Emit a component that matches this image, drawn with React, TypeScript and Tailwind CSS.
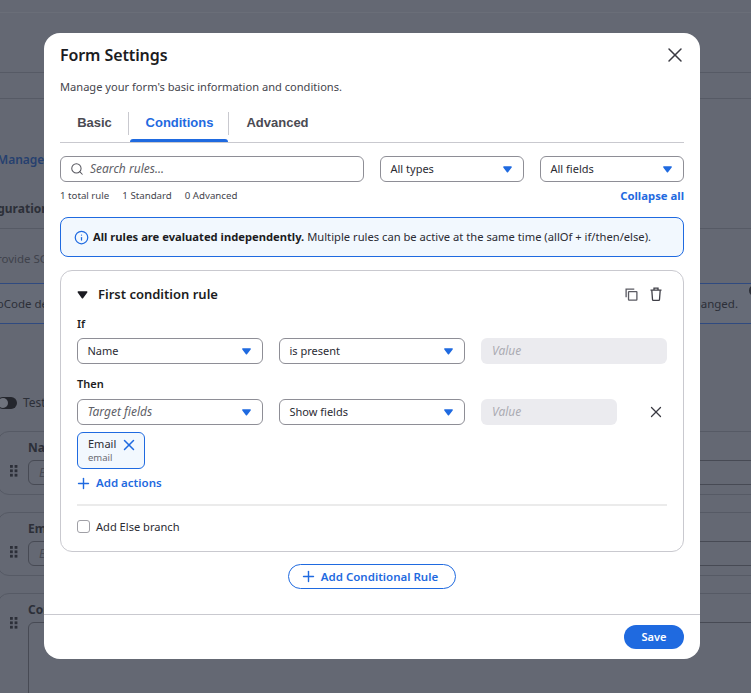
import { Search, X, Plus, Info } from 'lucide-react';

const Caret = ({ color = '#1f6ae0', big }: { color?: string; big?: boolean }) => (
  <svg width={big ? 11 : 9} height={big ? 8 : 7} viewBox="0 0 9 7" className="shrink-0">
    <path d="M.9.3h7.2c.6 0 .9.6.6 1.1L5 6.3c-.3.4-.8.4-1.1 0L.3 1.4C0 .9.3.3.9.3z" fill={color} />
  </svg>
);

const Select = ({ label, placeholder, className }: { label: string; placeholder?: boolean; className: string }) => (
  <div className={`h-[26px] rounded-md border border-[#8e8e96] bg-white flex items-center justify-between pl-[9.5px] pr-[11px] ${className}`}>
    <span className={placeholder ? 'text-xs italic text-[#5f5f68]' : 'text-[11px] text-[#2b2b33]'}>{label}</span>
    <Caret />
  </div>
);

const ValueInput = ({ className }: { className: string }) => (
  <div className={`h-[26px] rounded-md bg-[#ebebef] flex items-center pl-[11px] text-xs italic text-[#ababb3] ${className}`}>Value</div>
);

const Grip = () => (
  <svg width="8" height="12" viewBox="0 0 8 12" className="shrink-0">
    {[0, 4.4, 8.8].map((y) => (
      <g key={y} fill="#2c2f38">
        <rect x="0" y={y} width="2.8" height="2.8" />
        <rect x="4.6" y={y} width="2.8" height="2.8" />
      </g>
    ))}
  </svg>
);

const BackCard = ({ label, grip, tall }: { label: string; grip: string; tall?: boolean }) => (
  <div className={`ml-[-3px] w-[780px] rounded-xl border border-[#565a65] flex gap-[10px] pl-[12px] whitespace-nowrap ${tall ? 'h-[130px]' : 'h-[64px]'}`}>
    <div className={grip}>
      <Grip />
    </div>
    <div className="flex-1 pt-2">
      <div className="text-xs font-bold text-[#2c2f38] leading-4">{label}</div>
      <div className={`mt-1 w-[735px] rounded-md border border-[#474a54] pl-[10px] text-xs italic text-[#474a54] leading-[23px] ${tall ? 'h-[120px]' : 'h-[25px]'}`}>
        {!tall && 'Enter'}
      </div>
    </div>
  </div>
);

export default function App() {
  return (
    <div className="relative w-[751px] h-[693px] overflow-hidden bg-[#646873] font-['Noto_Sans',sans-serif]">
      {/* page behind the dialog */}
      <div className="h-[13px] border-b border-[#6a6e78]" />
      <div className="h-[60px] border-b border-[#565a65]" />
      <div className="h-[26px] border-b border-[#565a65]" />
      <div className="h-[130px] border-b border-[#565a65] pt-[53px] overflow-hidden whitespace-nowrap">
        <div className="ml-[-3px] text-xs font-semibold text-[#26406f] leading-4">Manage F</div>
        <div className="ml-[-34px] mt-[33px] text-xs font-bold text-[#2c2f38] leading-4">Configuration</div>
      </div>
      <div className="h-[54px] pt-[22px] overflow-hidden whitespace-nowrap">
        <div className="ml-[-10px] text-[11.5px] text-[#3f424b] leading-4">Provide SG</div>
      </div>
      <div className="h-[41px] border-y border-[#2f4a80] bg-[#666b77] flex items-center justify-between whitespace-nowrap overflow-hidden">
        <span className="ml-[-12px] text-[11.5px] text-[#2c2f38]">NoCode de</span>
        <div className="flex items-start gap-[11px] mr-[-9px]">
          <span className="text-[11.5px] text-[#2c2f38]">changed.</span>
          <span className="w-[11px] h-[11px] rounded-full bg-[#2c2f38] mt-[-10px]" />
        </div>
      </div>
      <div className="h-[107px] pt-[71px]">
        <div className="flex items-center gap-[6px]">
          <div className="ml-[-3px] w-[20px] h-[12px] rounded-full bg-[#24262d] flex items-center">
            <div className="w-[10px] h-[10px] rounded-full bg-[#6f737d] ml-[1px]" />
          </div>
          <span className="text-xs text-[#2c2f38]">Test</span>
        </div>
      </div>
      <BackCard label="Name" grip="pt-[33px]" />
      <div className="h-[17px]" />
      <BackCard label="Email" grip="pt-[33px]" />
      <div className="h-[17px]" />
      <BackCard label="Comments" grip="pt-[23px]" tall />

      {/* dialog */}
      <div className="absolute left-[44px] top-[33px] w-[656px] h-[626px] rounded-2xl bg-white flex flex-col">
        <div className="flex-1 min-h-0 px-4">
          <div className="flex items-center justify-between h-[44px] pb-[1px]">
            <h2 className="text-base font-semibold text-[#1c1c22] tracking-[-0.1px]">Form Settings</h2>
            <X size={24} strokeWidth={1.5} color="#3a3a42" className="mr-[-3px]" />
          </div>
          <p className="mt-[1px] h-[18px] text-[11.1px] leading-[18px] text-[#45454d]">Manage your form's basic information and conditions.</p>

          <div className="mt-[10px] h-[37px] border-b border-[#c9c9cf] flex font-['Liberation_Sans',sans-serif] text-[13px] font-bold">
            <div className="w-[68px] flex justify-center items-center text-[#4a4a52] pb-[3px] pl-[1px]">Basic</div>
            <div className="w-[101px] h-[23px] mt-[6px] border-x border-[#c9c9cf] flex flex-col">
              <div className="h-[21px] shrink-0 flex justify-center items-center text-[#1f6ae0] pl-[2px]">Conditions</div>
              <div className="h-[3px] shrink-0 ml-[1px] bg-[#1f6ae0] rounded-t-sm mt-[6px]" />
            </div>
            <div className="w-[97px] flex justify-center items-center text-[#4a4a52] pb-[3px]">Advanced</div>
          </div>

          <div className="mt-[13px] flex gap-4">
            <div className="w-[304px] h-[26px] rounded-md border border-[#8e8e96] flex items-center gap-[6px] pl-[9px]">
              <Search size={14} strokeWidth={1.75} color="#55555d" />
              <span className="text-xs italic text-[#5f5f68]">Search rules...</span>
            </div>
            <Select label="All types" className="w-[144px]" />
            <Select label="All fields" className="w-[144px]" />
          </div>

          <div className="mt-[6px] h-[16px] flex items-center justify-between">
            <div className="flex gap-[13px] text-[9.7px] text-[#45454d]">
              <span>1 total rule</span>
              <span>1 Standard</span>
              <span>0 Advanced</span>
            </div>
            <span className="text-[11.3px] font-bold text-[#1f6ae0]">Collapse all</span>
          </div>

          <div className="mt-[13px] h-[40px] rounded-lg border border-[#1f6ae0] bg-[#f2f8fe] flex items-center gap-[4px] px-[13px] text-[11.2px] text-[#2b2b33] whitespace-nowrap">
            <Info size={15} strokeWidth={2} color="#1f6ae0" className="shrink-0" />
            <span>
              <b className="font-bold text-[#1c1c22]">All rules are evaluated independently.</b> Multiple rules can be active at the same time (allOf + if/then/else).
            </span>
          </div>

          <div className="mt-[13px] h-[282px] rounded-xl border border-[#c9c9cf] px-4 pt-[15px]">
            <div className="flex items-center justify-between h-[18px]">
              <div className="flex items-center gap-[10px]">
                <Caret color="#1c1c22" big />
                <span className="text-[13px] font-semibold text-[#1c1c22]">First condition rule</span>
              </div>
              <div className="flex items-center gap-[12px] mr-[5px] mb-[2px]">
                <svg width="13" height="13" viewBox="0 0 14 14" fill="none" stroke="#5a5a62" strokeWidth="1.4">
                  <path d="M1.2 10V1.2H10" />
                  <rect x="3.8" y="3.8" width="9" height="9.2" rx="0.6" />
                </svg>
                <svg width="12" height="14" viewBox="0 0 12 14" fill="none" stroke="#3f3f47" strokeWidth="1.3">
                  <path d="M.5 3.2h11M4 3V1.2h4V3" />
                  <path d="M1.8 3.2l.7 9.2c0 .5.4.9.9.9h5.2c.5 0 .9-.4.9-.9l.7-9.2" />
                </svg>
              </div>
            </div>

            <div className="mt-[12px] h-[15px] text-[11px] leading-[15px] font-semibold text-[#1c1c22]">If</div>
            <div className="mt-[7px] flex gap-4">
              <Select label="Name" className="w-[186px]" />
              <Select label="is present" className="w-[186px]" />
              <ValueInput className="w-[186px]" />
            </div>

            <div className="mt-[12px] h-[15px] text-[11px] leading-[15px] font-semibold text-[#1c1c22]">Then</div>
            <div className="mt-[8px] flex items-center gap-4">
              <Select label="Target fields" placeholder className="w-[186px]" />
              <Select label="Show fields" className="w-[186px]" />
              <ValueInput className="w-[136px]" />
              <X size={18} strokeWidth={1.75} color="#3a3a42" className="ml-[14px]" />
            </div>

            <div className="mt-[7px] w-[68px] h-[37px] rounded-md border border-[#1f6ae0] bg-[#f2f8fe] pl-[10px] pr-[6px] pt-[3px] flex items-start justify-between">
              <div className="flex flex-col">
                <span className="text-[11px] leading-[16px] text-[#2b2b33]">Email</span>
                <span className="text-[9.5px] leading-[12px] text-[#6a6a72]">email</span>
              </div>
              <X size={18} strokeWidth={2} color="#1f6ae0" />
            </div>

            <div className="mt-[5px] ml-[-2px] flex items-center gap-[4px] h-[18px] text-[11.5px] font-semibold text-[#1f6ae0]">
              <Plus size={17} strokeWidth={2} />
              <span>Add actions</span>
            </div>

            <div className="mt-[12px] h-[2px] bg-[#ebebeb]" />

            <div className="mt-[13px] flex items-center gap-[6px]">
              <div className="w-[13px] h-[13px] rounded-[3px] border border-[#a0a0a6] bg-white" />
              <span className="text-[11.1px] leading-[15px] text-[#2b2b33]">Add Else branch</span>
            </div>
          </div>

          <div className="mt-[12px] flex justify-center">
            <div className="w-[168px] h-[25px] rounded-full border border-[#1f6ae0] flex items-center justify-center gap-[4px] pr-[6px] text-[11.5px] font-semibold text-[#1f6ae0]">
              <Plus size={17} strokeWidth={2} />
              <span>Add Conditional Rule</span>
            </div>
          </div>
        </div>

        <div className="h-[45px] border-t border-[#c9c9cf] flex items-center justify-end px-4">
          <div className="w-[60px] h-[24px] rounded-full bg-[#1f6ae0] flex items-center justify-center text-[11px] font-semibold text-white">Save</div>
        </div>
      </div>
    </div>
  );
}
